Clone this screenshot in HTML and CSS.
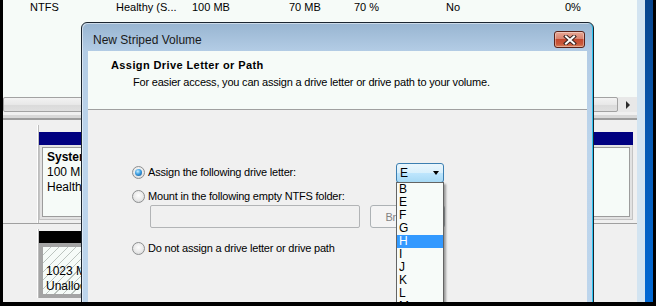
FILE: index.html
```html
<!DOCTYPE html>
<html lang="en">
<head>
  <meta charset="UTF-8">
  <title>Disk Management - New Striped Volume</title>
  <link rel="stylesheet" href="styles.css">
</head>
<body>
  <div class="screen">
    <div class="desktop">

      <div class="mmc">
        <div class="mmc-content">
          <div class="volume-list">
            <div class="vol-row">
              <span class="col c-fs">NTFS</span>
              <span class="col c-status">Healthy (S...</span>
              <span class="col c-cap">100 MB</span>
              <span class="col c-free">70 MB</span>
              <span class="col c-pct">70 %</span>
              <span class="col c-ft">No</span>
              <span class="col c-over">0%</span>
            </div>
          </div>

          <div class="hscroll">
            <div class="hscroll-thumb"></div>
            <div class="hscroll-btn"><span class="arrow-right"></span></div>
          </div>
          <div class="splitter"></div>

          <div class="disk-map">
            <div class="disk-row">
              <div class="disk-label"></div>
              <div class="partitions">
                <div class="part part-sys">
                  <div class="part-bar"></div>
                  <div class="part-box">
                    <div class="part-inner">
                      <b>System Reserved</b>
                      <span>100 MB NTFS</span>
                      <span>Healthy (System, Active, Primary Partition)</span>
                    </div>
                  </div>
                </div>
                <div class="part part-c">
                  <div class="part-bar"></div>
                  <div class="part-box">
                    <div class="part-inner">
                      <b>(C:)</b>
                      <span>59.90 GB NTFS</span>
                      <span>Healthy (Boot, Page File, Crash Dump, Primary Partition)</span>
                    </div>
                  </div>
                </div>
              </div>
            </div>

            <div class="disk-row second">
              <div class="disk-label"></div>
              <div class="partitions">
                <div class="part part-free">
                  <div class="part-bar unalloc"></div>
                  <div class="hatch-box">
                    <span>1023 MB</span>
                    <span>Unallocated</span>
                  </div>
                </div>
              </div>
            </div>
          </div>
        </div>
        <div class="frame-light"></div>
        <div class="frame-blue"></div>
      </div>

      <div class="dialog">
        <div class="titlebar">
          <span class="title">New Striped Volume</span>
          <button class="close-btn" title="Close">
            <svg width="14" height="10" viewBox="0 0 14 10">
              <path d="M3 1.5 L11 8.5 M11 1.5 L3 8.5" stroke="#3a2520" stroke-width="4" stroke-linecap="square" fill="none"/>
              <path d="M3 1.5 L11 8.5 M11 1.5 L3 8.5" stroke="#ffffff" stroke-width="2" stroke-linecap="square" fill="none"/>
            </svg>
          </button>
        </div>

        <div class="client">
          <div class="wiz-header">
            <div class="wiz-title">Assign Drive Letter or Path</div>
            <div class="wiz-sub">For easier access, you can assign a drive letter or drive path to your volume.</div>
          </div>

          <div class="wiz-body">
            <div class="opt-row">
              <label class="opt opt-main"><span class="radio on"></span>Assign the following drive letter:</label>
              <div class="combo-wrap">
                <div class="combo"><span>E</span><span class="caret"></span></div>
                <ul class="drop-list">
                  <li>B</li>
                  <li>E</li>
                  <li>F</li>
                  <li>G</li>
                  <li class="selected">H</li>
                  <li>I</li>
                  <li>J</li>
                  <li>K</li>
                  <li>L</li>
                  <li>M</li>
                </ul>
              </div>
            </div>

            <div class="opt-row">
              <label class="opt"><span class="radio"></span>Mount in the following empty NTFS folder:</label>
            </div>
            <div class="folder-row">
              <div class="text-field"></div>
              <button class="btn" disabled>Browse...</button>
            </div>

            <div class="opt-row last">
              <label class="opt"><span class="radio"></span>Do not assign a drive letter or drive path</label>
            </div>
          </div>
        </div>
      </div>

    </div>
  </div>
</body>
</html>
```

FILE: styles.css
```css
* {
  box-sizing: border-box;
}

body {
  margin: 0;
  background: #000;
  font-family: "Liberation Sans", Arial, sans-serif;
  font-size: 11px;
  color: #000;
}

.screen {
  width: 656px;
  height: 306px;
  padding: 0 3px 4px 3px;
  background: #000;
  overflow: hidden;
}

.desktop {
  position: relative;
  width: 650px;
  height: 302px;
  overflow: hidden;
}

/* background console window */

.mmc {
  display: flex;
  height: 100%;
}

.mmc-content {
  width: 634px;
  display: flex;
  flex-direction: column;
  background: #f0f0f0;
}

.frame-light {
  width: 8px;
  background: #d3e4f1;
}

.frame-blue {
  width: 8px;
  background: linear-gradient(#07448c, #0759b2 45%, #0068d4);
}

.volume-list {
  height: 97px;
  background: #f6fbf8;
}

.vol-row {
  display: flex;
  padding: 1px 0 0 27px;
  line-height: 13px;
  white-space: nowrap;
}

.c-fs { width: 86px; }
.c-status { width: 76px; }
.c-cap { width: 97px; }
.c-free { width: 65px; }
.c-pct { width: 92px; }
.c-ft { width: 119px; }

.hscroll {
  height: 15px;
  display: flex;
  background: #e8e8e8;
}

.hscroll-thumb {
  flex: 1;
  border: 1px solid #a2a2a2;
  border-radius: 2px;
  background: linear-gradient(#f3f3f3, #e8e8e8 50%, #dadada 51%, #e0e0e0);
}

.hscroll-btn {
  width: 19px;
  display: flex;
  align-items: center;
  justify-content: center;
}

.arrow-right {
  border-left: 4px solid #2b2b2b;
  border-top: 4px solid transparent;
  border-bottom: 4px solid transparent;
}

.splitter {
  height: 8px;
  background: linear-gradient(#f0f0f0 0 3px, #d8d8d8 3px 6px, #9d9d9d 6px 8px);
}

.disk-map {
  flex: 1;
  background: #f0f0f0;
}

.disk-row {
  display: flex;
  height: 104px;
  border-bottom: 1px solid #a0a0a0;
}

.disk-row.second {
  height: auto;
  border-bottom: none;
}

.disk-label {
  width: 36px;
  margin-top: 5px;
  border-right: 1px solid #bdbdbd;
  box-shadow: inset -1px 0 0 #fff;
}

.partitions {
  flex: 1;
  display: flex;
  padding-top: 12px;
}

.disk-row.second .partitions {
  padding-top: 7px;
}

.part {
  display: flex;
  flex-direction: column;
}

.part-sys { width: 230px; }
.part-c { width: 364px; }
.part-free { width: 250px; }

.part-bar {
  height: 13px;
  background: #000080;
}

.part-bar.unalloc {
  height: 12px;
  background: #000;
}

.part-box {
  height: 75px;
  padding: 2px;
  border: 1px solid #c4c4c4;
  border-top: none;
  background: #e2e2e2;
}

.part-inner {
  height: 100%;
  padding: 2px 0 0 4px;
  border: 1px solid #9c9c9c;
  background: #f6fbf8;
  font-size: 12px;
  line-height: 15px;
  white-space: nowrap;
  overflow: hidden;
}

.part-inner b,
.part-inner span,
.hatch-box span {
  display: block;
}

.hatch-box {
  flex: 1;
  padding: 17px 0 0 3px;
  border: 4px solid #a4a4a4;
  background: #f6fbf8 repeating-linear-gradient(135deg, transparent 0 5px, #bcc4bf 5px 6px);
  font-size: 12px;
  line-height: 15px;
  white-space: nowrap;
}

/* wizard dialog */

.dialog {
  position: absolute;
  left: 78px;
  top: 22px;
  width: 513px;
  height: 300px;
  padding: 0 6px;
  display: flex;
  flex-direction: column;
  border: 1px solid #1b2530;
  border-radius: 6px 6px 0 0;
  background: linear-gradient(#98b5d1, #b3cce5 28px, #bcd4eb 120px, #bdd5ec);
  box-shadow: inset 1px 1px 0 rgba(255, 255, 255, 0.5), inset -1px 0 0 #2bc4f2;
}

.titlebar {
  height: 28px;
  display: flex;
  padding-left: 5px;
}

.title {
  padding-top: 10px;
  font-size: 12px;
  line-height: 15px;
  color: #1a1a1a;
}

.close-btn {
  width: 31px;
  height: 17px;
  margin: 8px 2px 0 auto;
  padding: 0;
  display: flex;
  align-items: center;
  justify-content: center;
  border: 1px solid #5b2218;
  border-radius: 3px;
  background: linear-gradient(#e9a895, #d88470 45%, #c44a30 50%, #c9583a 80%, #d8835c);
  box-shadow: inset 0 0 0 1px rgba(255, 255, 255, 0.35);
}

.client {
  flex: 1;
  background: #f0f0f0;
  letter-spacing: -0.2px;
}

.wiz-header {
  height: 59px;
  padding: 8px 0 0 23px;
  border-bottom: 1px solid #a0a0a0;
  background: #f6fbf8;
}

.wiz-title {
  font-weight: bold;
  line-height: 13px;
  letter-spacing: 0.4px;
}

.wiz-sub {
  margin: 4px 0 0 22px;
  line-height: 13px;
}

.wiz-body {
  padding: 54px 0 0 44px;
}

.opt-row {
  height: 16px;
  display: flex;
  align-items: center;
}

.opt-row + .opt-row {
  margin-top: 8px;
}

.opt-row.last {
  margin-top: 12px;
}

.opt {
  display: flex;
  align-items: center;
  gap: 3px;
  line-height: 13px;
  white-space: nowrap;
}

.opt-main {
  width: 264px;
}

.radio {
  position: relative;
  width: 13px;
  height: 13px;
  flex: none;
  border: 1px solid #8d8f90;
  border-radius: 50%;
  background: radial-gradient(circle at 50% 40%, #fdfdfd 0, #e9e9e9 55%, #cfd0d1 100%);
}

.radio.on::after {
  content: "";
  position: absolute;
  left: 2px;
  top: 2px;
  width: 7px;
  height: 7px;
  border-radius: 50%;
  background: radial-gradient(circle at 40% 35%, #c8eeff 0, #3c9fe2 45%, #0e4c8c 100%);
}

.combo-wrap {
  position: relative;
  align-self: flex-start;
  margin-top: -1px;
}

.combo {
  width: 48px;
  height: 20px;
  padding: 0 4px 0 3px;
  display: flex;
  align-items: center;
  justify-content: space-between;
  border: 1px solid #3c7fb1;
  border-radius: 3px;
  background: linear-gradient(#eaf6fd 0, #d9f0fc 49%, #bee6fd 50%, #a7d9f5 100%);
  font-size: 12px;
}

.caret {
  border-top: 4px solid #000;
  border-left: 3.5px solid transparent;
  border-right: 3.5px solid transparent;
}

.drop-list {
  position: absolute;
  left: 0;
  top: 19px;
  width: 48px;
  margin: 0;
  padding: 0;
  list-style: none;
  border: 1px solid #646464;
  background: #f7fbf9;
  box-shadow: 2px 2px 2px rgba(0, 0, 0, 0.35);
  z-index: 2;
}

.drop-list li {
  height: 13px;
  padding-left: 2px;
  font-size: 12px;
  line-height: 13px;
}

.drop-list li.selected {
  background: #3399ff;
  color: #fff;
}

.folder-row {
  display: flex;
  gap: 10px;
  height: 23px;
  margin-top: 1px;
  padding-left: 18px;
}

.text-field {
  width: 210px;
  border: 1px solid #b2b4b6;
  border-radius: 2px;
  background: #f0f0f0;
}

.btn {
  width: 75px;
  padding: 0;
  border: 1px solid #adb2b5;
  border-radius: 3px;
  background: #f4f4f4;
  color: #838383;
  font-family: inherit;
  font-size: 11px;
  letter-spacing: -0.2px;
}
```
